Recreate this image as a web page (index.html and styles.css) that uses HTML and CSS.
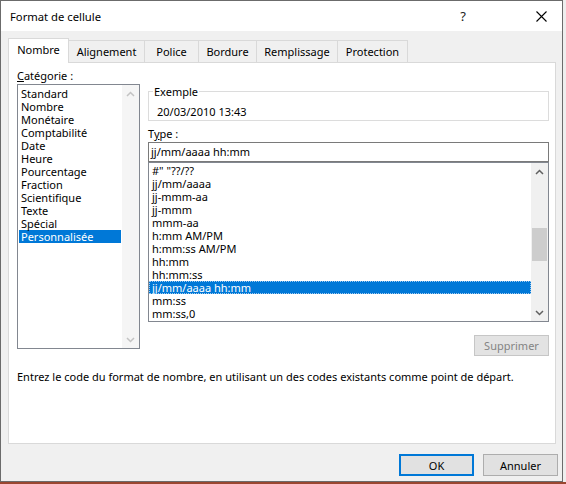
FILE: index.html
```html
<!DOCTYPE html>
<html lang="fr">
<head>
<meta charset="utf-8">
<title>Format de cellule</title>
<link rel="stylesheet" href="styles.css">
</head>
<body>
<div class="desk">
  <div class="dialog">
    <div class="titlebar">
      <span class="title">Format de cellule</span>
      <span class="help">?</span>
      <span class="close"><svg width="11" height="11" viewBox="0 0 11 11"><path d="M0.5 0.5 L10.5 10.5 M10.5 0.5 L0.5 10.5" stroke="#000" stroke-width="1.1" fill="none"/></svg></span>
    </div>

    <div class="tabs">
      <div class="tab active">Nombre</div>
      <div class="tab">Alignement</div>
      <div class="tab">Police</div>
      <div class="tab">Bordure</div>
      <div class="tab">Remplissage</div>
      <div class="tab">Protection</div>
    </div>

    <div class="panel">
      <div class="cols">
        <div class="left">
          <div class="label"><u>C</u>atégorie :</div>
          <div class="listbox cat">
            <ul class="items">
              <li>Standard</li>
              <li>Nombre</li>
              <li>Monétaire</li>
              <li>Comptabilité</li>
              <li>Date</li>
              <li>Heure</li>
              <li>Pourcentage</li>
              <li>Fraction</li>
              <li>Scientifique</li>
              <li>Texte</li>
              <li>Spécial</li>
              <li class="sel">Personnalisée</li>
            </ul>
            <div class="vscroll off">
              <span class="arrow"><svg width="9" height="6" viewBox="0 0 9 6"><polyline points="1,5 4.5,1.5 8,5" fill="none" stroke="currentColor" stroke-width="1.5"/></svg></span>
              <span class="track"></span>
              <span class="arrow"><svg width="9" height="6" viewBox="0 0 9 6"><polyline points="1,1 4.5,4.5 8,1" fill="none" stroke="currentColor" stroke-width="1.5"/></svg></span>
            </div>
          </div>
        </div>

        <div class="right">
          <fieldset class="sample">
            <legend>Exemple</legend>
            <div class="sample-value">20/03/2010 13:43</div>
          </fieldset>
          <div class="label type-label">T<u>y</u>pe :</div>
          <div class="input">jj/mm/aaaa hh:mm</div>
          <div class="listbox types">
            <ul class="items">
              <li>#" "??/??</li>
              <li>jj/mm/aaaa</li>
              <li>jj-mmm-aa</li>
              <li>jj-mmm</li>
              <li>mmm-aa</li>
              <li>h:mm AM/PM</li>
              <li>h:mm:ss AM/PM</li>
              <li>hh:mm</li>
              <li>hh:mm:ss</li>
              <li class="sel focus">jj/mm/aaaa hh:mm</li>
              <li>mm:ss</li>
              <li>mm:ss,0</li>
            </ul>
            <div class="vscroll">
              <span class="arrow"><svg width="9" height="6" viewBox="0 0 9 6"><polyline points="1,5 4.5,1.5 8,5" fill="none" stroke="currentColor" stroke-width="1.5"/></svg></span>
              <span class="track"><span class="thumb"></span></span>
              <span class="arrow"><svg width="9" height="6" viewBox="0 0 9 6"><polyline points="1,1 4.5,4.5 8,1" fill="none" stroke="currentColor" stroke-width="1.5"/></svg></span>
            </div>
          </div>
          <div class="btnrow">
            <button class="btn disabled">Supprimer</button>
          </div>
        </div>
      </div>
      <p class="hint">Entrez le code du format de nombre, en utilisant un des codes existants comme point de départ.</p>
    </div>

    <div class="footer">
      <button class="btn default">OK</button>
      <button class="btn">Annuler</button>
    </div>
  </div>
  <div class="bottom-strip"></div>
</div>
</body>
</html>
```

FILE: styles.css
```css
* { box-sizing: border-box; }

html, body {
  margin: 0;
  padding: 0;
}

body {
  width: 566px;
  height: 484px;
  overflow: hidden;
  background: #eeeeee;
  font-family: "Noto Sans", "Open Sans", sans-serif;
  font-size: 11px;
  line-height: 15px;
  color: #000;
}

.desk {
  display: flex;
  flex-direction: column;
  height: 484px;
}

.dialog {
  width: 563px;
  height: 482px;
  border: 1px solid #6b6b6b;
  background: #f0f0f0;
  display: flex;
  flex-direction: column;
}

.bottom-strip {
  height: 2px;
  background: #9a4630;
}

/* title bar */
.titlebar {
  height: 30px;
  flex: none;
  background: #fff;
  display: flex;
  align-items: center;
  padding-left: 9px;
  font-size: 11.25px;
}

.title { flex: 1; }

.help {
  width: 24px;
  text-align: center;
  font-size: 13px;
  color: #222;
  margin-right: 45px;
}

.close {
  width: 42px;
  display: flex;
  justify-content: center;
  align-items: center;
}

/* tabs */
.tabs {
  height: 31px;
  flex: none;
  display: flex;
  align-items: flex-end;
  padding-left: 7px;
}

.tab {
  height: 22px;
  border: 1px solid #d9d9d9;
  border-bottom: none;
  margin-right: -1px;
  background: #f0f0f0;
  display: flex;
  align-items: center;
  justify-content: center;
  padding-bottom: 1px;
}

.tab.active {
  background: #fff;
  position: relative;
  z-index: 1;
  margin-bottom: -1px;
  height: 25px;
  padding-bottom: 4px;
}

.tab:nth-child(1) { width: 61px; }
.tab:nth-child(2) { width: 77px; }
.tab:nth-child(3) { width: 55px; }
.tab:nth-child(4) { width: 59px; }
.tab:nth-child(5) { width: 82px; }
.tab:nth-child(6) { width: 71px; }

/* panel */
.panel {
  margin-left: 7px;
  width: 548px;
  height: 382px;
  flex: none;
  background: #fff;
  border: 1px solid #d9d9d9;
  padding: 5px 0 0 8px;
}

.cols {
  display: grid;
  grid-template-columns: 123px 401px;
  column-gap: 8px;
  align-items: start;
}

.label {
  height: 16px;
}

.right { padding-top: 16px; }

/* list boxes */
.listbox {
  border: 1px solid #828790;
  display: flex;
  background: #fff;
}

.listbox.cat { height: 265px; }
.listbox.types { height: 160px; }

.items {
  list-style: none;
  margin: 0;
  flex: 1;
  min-width: 0;
  white-space: nowrap;
  overflow: hidden;
}

.cat .items { padding: 2px 1px 0 1px; }
.types .items { padding: 1px 0 0 0; }

.items li {
  height: 13px;
  line-height: 13px;
  padding-left: 2px;
}

.types .items li { padding-left: 3px; }

.items li.sel {
  background: #0078d7;
  color: #fff;
}

.items li.focus {
  outline: 1px dotted #9fc9ee;
  outline-offset: -1px;
}

/* scrollbars */
.vscroll {
  width: 17px;
  flex: none;
  background: #f0f0f0;
  display: flex;
  flex-direction: column;
  color: #606060;
}

.vscroll.off {
  color: #c3c3c3;
  background: #f5f5f5;
}

.vscroll .arrow {
  height: 17px;
  flex: none;
  display: flex;
  align-items: center;
  justify-content: center;
}

.vscroll .track {
  flex: 1;
  padding-top: 48px;
}

.thumb {
  display: block;
  height: 33px;
  margin: 0 1px;
  background: #cdcdcd;
}

/* sample */
.sample {
  margin: 0;
  padding: 5px 8px 1px 8px;
  border: 1px solid #dcdcdc;
  min-width: 0;
}

.sample legend {
  padding: 0 1px;
  margin-left: -4px;
}

.type-label {
  margin-top: 5px;
  height: 16px;
}

.input {
  height: 20px;
  border: 1px solid #7a7a7a;
  padding-left: 2px;
  line-height: 18px;
}

.btnrow {
  display: flex;
  justify-content: flex-end;
  margin-top: 13px;
}

/* buttons */
.btn {
  font: inherit;
  width: 75px;
  height: 22px;
  padding: 0;
  background: #e1e1e1;
  border: 1px solid #adadad;
  color: #000;
}

.btn.disabled {
  background: #e3e3e3;
  border-color: #c6c6c6;
  color: #838383;
  height: 21px;
}

.btn.default {
  border: 2px solid #0078d7;
}

.hint {
  margin: 13px 0 0 0;
}

.footer {
  flex: none;
  display: flex;
  justify-content: flex-end;
  gap: 9px;
  padding: 10px 4px 0 0;
}
```
